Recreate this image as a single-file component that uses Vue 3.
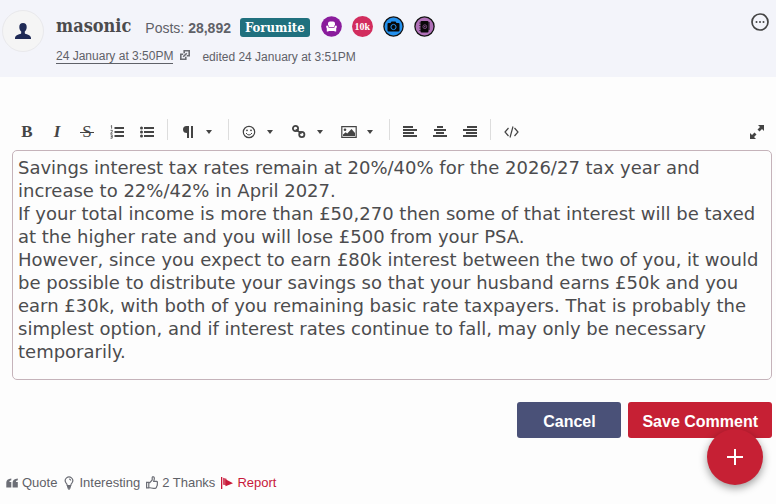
<script setup>
import { ref } from 'vue'

const comment = ref(
  'Savings interest tax rates remain at 20%/40% for the 2026/27 tax year and increase to 22%/42% in April 2027.\n' +
  'If your total income is more than £50,270 then some of that interest will be taxed at the higher rate and you will lose £500 from your PSA.\n' +
  'However, since you expect to earn £80k interest between the two of you, it would be possible to distribute your savings so that your husband earns £50k and you earn £30k, with both of you remaining basic rate taxpayers. That is probably the simplest option, and if interest rates continue to fall, may only be necessary temporarily.'
)
</script>

<template>
  <article class="post">
    <header class="head">
      <a class="avatar" href="#" aria-label="masonic profile">
        <svg width="16" height="16" viewBox="0 0 16 16"><path fill="#1f2a56" d="M8 0C5.6 0 4.3 1.6 4.3 4c0 2 .8 3.7 1.9 4.6v1.6C5.8 11.3 0 11.5 0 15v1h16v-1c0-3.5-5.800-3.700-6.200-4.800V8.600C10.900 7.700 11.700 6 11.700 4 11.700 1.600 10.400 0 8 0z" /></svg>
      </a>
      <div class="meta">
        <div class="line">
          <a class="name" href="#">masonic</a>
          <span class="posts">Posts: <b>28,892</b></span>
          <span class="rank">Forumite</span>
          <span class="badges">
            <svg width="21" height="21" viewBox="0 0 21 21"><circle cx="10.500" cy="10.500" r="10.300" fill="#8a1c9c" /><path fill="#fff" d="M7 9V7.500Q7 5.500 9 5.500h3q2 0 2 2V9q-1 .3-1 2H8q0-1.700-1-2zM6 9.500q1.600 0 1.600 2.200h5.800q0-2.200 1.600-2.200 1.300.2.700 2l-.5 1v3H13.500v-.6h-6v.6H5.800v-3l-.5-1q-.6-1.800.7-2z" /></svg>
            <span class="tenk">10k</span>
            <svg width="21" height="21" viewBox="0 0 21 21"><circle cx="10.500" cy="10.500" r="9.600" fill="#2491ee" stroke="#111" stroke-width="1.300" /><path fill="#080808" d="M5.500 7h2l1-1.500h4l1 1.500h2q1 0 1 1v6.500q0 1-1 1h-10q-1 0-1-1V8q0-1 1-1z" /><circle cx="10.500" cy="11" r="2.600" fill="none" stroke="#2491ee" /></svg>
            <svg width="21" height="21" viewBox="0 0 21 21"><circle cx="10.500" cy="10.500" r="9.600" fill="#b070b8" stroke="#111" stroke-width="1.300" /><rect x="6.500" y="5" width="8" height="11.500" rx="1" fill="#080808" /><path stroke="#080808" d="M5.500 7h1M5.500 9.500h1M5.500 12h1M5.500 14.500h1M15 6v8" /><circle cx="10.800" cy="10.700" r="1.900" fill="none" stroke="#74467a" /><circle cx="10.800" cy="10.700" r=".6" fill="#ad6bb5" /></svg>
          </span>
        </div>
        <div class="dates">
          <a class="date" href="#">24 January at 3:50PM</a>
          <svg class="permalink" width="10" height="10" viewBox="0 0 10 10" fill="none" stroke="#6b6d73" stroke-width="1.600"><path d="M3.200 4.200H.8v5h5V6.800M4.200 3.200V.8h5v5H6.800M3.200 6.800l3.600-3.600" /></svg>
          <span>edited 24 January at 3:51PM</span>
        </div>
      </div>
      <button class="more" aria-label="More options">
        <svg width="18" height="18" viewBox="0 0 18 18"><circle cx="9" cy="9" r="8" fill="none" stroke="#444" stroke-width="1.700" /><g fill="#444"><circle cx="5.500" cy="9" r="1" /><circle cx="9" cy="9" r="1" /><circle cx="12.500" cy="9" r="1" /></g></svg>
      </button>
    </header>

    <form class="editor" @submit.prevent>
      <div class="toolbar" role="toolbar" aria-label="Formatting">
        <button type="button" class="letter bold" aria-label="Bold">B</button>
        <button type="button" class="letter italic" aria-label="Italic">I</button>
        <button type="button" class="letter strike" aria-label="Strikethrough">S</button>
        <button type="button" aria-label="Ordered list">
          <svg width="14" height="14" viewBox="0 0 14 14" fill="none" stroke="#444"><path stroke-width="2" d="M4.500 3H14M4.500 7H14M4.500 11H14" /><path stroke-width=".8" d="M.8 1l.8-.5v3.200M.5 5.300h1.800v1.200L.6 8.200h2M.5 9.800h1.700v3.400H.5M.8 11.400h1.400" /></svg>
        </button>
        <button type="button" aria-label="Bulleted list">
          <svg width="14" height="14" viewBox="0 0 14 14" fill="#444"><path d="M4 2h10v2H4zM4 6h10v2H4zM4 10h10v2H4z" /><circle cx="1.500" cy="3" r="1.500" /><circle cx="1.500" cy="7" r="1.500" /><circle cx="1.500" cy="11" r="1.500" /></svg>
        </button>
        <span class="sep"></span>
        <button type="button" aria-label="Paragraph format">
          <svg width="12" height="12" viewBox="0 0 12 12" fill="#444"><path d="M4.500 0H7v12H5V7Q1 7 1 3.500 1 0 4.500 0zM9 0h2v12H9z" /></svg>
        </button>
        <button type="button" class="caret" aria-label="Paragraph menu"><i></i></button>
        <span class="sep"></span>
        <button type="button" aria-label="Emoji">
          <svg width="14" height="14" viewBox="0 0 14 14"><circle cx="7" cy="7" r="5.700" fill="none" stroke="#444" stroke-width="1.200" /><circle cx="5" cy="5.300" r=".9" fill="#444" /><circle cx="9" cy="5.300" r=".9" fill="#444" /><path fill="none" stroke="#444" d="M4 8q3 4 6 0" /></svg>
        </button>
        <button type="button" class="caret" aria-label="Emoji menu"><i></i></button>
        <button type="button" aria-label="Link">
          <svg width="14" height="14" viewBox="0 0 14 14" fill="none" stroke="#444" stroke-width="1.800"><circle cx="3.500" cy="3.500" r="2.600" /><circle cx="9.800" cy="9.500" r="2.600" /><path d="M4 4.300q1 2.200 3 1.900M9.300 8.700q-1-2.200-3-1.900" /></svg>
        </button>
        <button type="button" class="caret" aria-label="Link menu"><i></i></button>
        <button type="button" aria-label="Image">
          <svg width="16" height="14" viewBox="0 0 16 14"><path fill="none" stroke="#444" stroke-width="1.200" d="M.8 1.600h14.400v10.800H.8z" /><circle cx="4" cy="4.700" r="1.300" fill="#444" /><path fill="#444" d="M2 11V9.500l2.700-2.200 1.500 1.200L10.500 4 14 8v3z" /></svg>
        </button>
        <button type="button" class="caret" aria-label="Image menu"><i></i></button>
        <span class="sep"></span>
        <button type="button" aria-label="Align left">
          <svg width="14" height="12" viewBox="0 0 14 12" fill="#444"><path d="M0 0h10v2H0zM0 3h14v2H0zM0 6h11v2H0zM0 9h14v2H0z" /></svg>
        </button>
        <button type="button" aria-label="Align centre">
          <svg width="14" height="12" viewBox="0 0 14 12" fill="#444"><path d="M4 0h6v2H4zM1 3h12v2H1zM3 6h8v2H3zM0 9h14v2H0z" /></svg>
        </button>
        <button type="button" aria-label="Align right">
          <svg width="14" height="12" viewBox="0 0 14 12" fill="#444"><path d="M4 0h10v2H4zM0 3h14v2H0zM3 6h11v2H3zM0 9h14v2H0z" /></svg>
        </button>
        <span class="sep"></span>
        <button type="button" aria-label="Code view">
          <svg width="15" height="12" viewBox="0 0 15 12" fill="none" stroke="#444" stroke-width="1.200"><path d="M4.500 2L1 6l3.500 4M10.500 2L14 6l-3.500 4M9 .5L6 11.500" /></svg>
        </button>
        <button type="button" class="expand" aria-label="Fullscreen">
          <svg width="16" height="16" viewBox="0 0 16 16"><path fill="#444" d="M9 1h6v6l-2-2-2.500 2.500-2-2L11 3zM1 9l2 2 2.500-2.500 2 2L5 13l2 2H1z" /></svg>
        </button>
      </div>
      <textarea v-model="comment" rows="9" aria-label="Comment" spellcheck="false"></textarea>
      <div class="actions">
        <button type="button" class="btn cancel">Cancel</button>
        <button type="submit" class="btn save">Save Comment</button>
      </div>
    </form>

    <footer class="reactions">
      <a href="#">
        <svg width="12" height="14" viewBox="0 0 12 14" fill="#6c6e76"><path d="M5.300 2.500v1.800Q3.500 4.500 3.300 6H5.300v5.500H.3V6.500Q.3 3 5.300 2.500zM11.800 2.500v1.800Q10 4.500 9.800 6h2v5.500H6.600V6.500q0-3.500 5.200-4z" /></svg>
        <span>Quote</span>
      </a>
      <a href="#">
        <svg width="12" height="14" viewBox="0 0 12 14" fill="none" stroke="#6c6e76" stroke-width="1.200"><path d="M4.200 9.500Q4.200 8 3 6.800A3.700 3.700 0 1 1 9 6.800Q7.800 8 7.800 9.500zM6 3q1.500 0 1.700 1.500" /><path stroke-width="1.600" d="M4 10.300h4M4.300 11.800h3.400M5.200 13h1.600" /></svg>
        <span>Interesting</span>
      </a>
      <a href="#">
        <svg width="12" height="14" viewBox="0 0 12 14" fill="none" stroke="#6c6e76" stroke-width="1.200"><path d="M.6 6.300h2.200v5.600H.6zM2.800 6.600h1L6.200 4V1.500q.2-1 1.300-.7 1.200.7.700 2.500L7.700 5.300h3q1.200.6.500 1.700.6.800 0 1.700.3 1-.5 1.600 0 2.200-3 2-2.500-.1-4.900-.8" /></svg>
        <span>2 Thanks</span>
      </a>
      <a href="#" class="report">
        <svg width="12" height="14" viewBox="0 0 12 14" fill="#c8193a"><path d="M0 1h1.300v12H0z" /><path fill="#d64a63" d="M2 1.800l3.500 1v6.500L2 8.800z" /><path d="M4.500 3.200L12 7.300l-7.500 3z" /></svg>
        <span>Report</span>
      </a>
    </footer>
    <button class="fab" aria-label="New discussion">
      <svg width="16" height="16" viewBox="0 0 16 16" stroke="#fff" stroke-width="2"><path d="M8 0v16M0 8h16" /></svg>
    </button>
  </article>
</template>

<style>
body {
  background: #fdfdfd;
}
</style>

<style scoped>
.post {
  font-family: "Liberation Sans", Arial, sans-serif;
  color: #5f6168;
}
button {
  border: 0;
  padding: 0;
  background: none;
  color: inherit;
  font: inherit;
  cursor: pointer;
}
a {
  color: inherit;
  text-decoration: none;
}
svg {
  display: block;
  flex: none;
}
.head {
  display: flex;
  align-items: flex-start;
  min-height: 77px;
  box-sizing: border-box;
  padding: 10px 7px 0 2px;
  background: #f3f4fa;
}
.avatar {
  display: flex;
  align-items: center;
  justify-content: center;
  box-sizing: border-box;
  width: 42px;
  height: 42px;
  border: 1px solid #e9e9ec;
  border-radius: 50%;
  background: #f5f5f5;
}
.meta {
  flex: 1;
  padding: 5px 0 0 12px;
}
.line {
  display: flex;
  align-items: center;
  height: 22px;
}
.name {
  color: #4b4b4d;
  font: bold 18px/22px "DejaVu Serif Condensed", "DejaVu Serif", serif;
}
.posts {
  margin: 4px 9px 0 14px;
  font-size: 14px;
  white-space: nowrap;
}
.rank {
  margin-top: 3px;
  padding: 0 5px;
  border-radius: 3px;
  background: #20707e;
  color: #fff;
  font: bold 13px/19px "DejaVu Serif Condensed", "DejaVu Serif", serif;
}
.badges {
  display: flex;
  gap: 10px;
  margin-left: 11px;
}
.tenk {
  width: 21px;
  border-radius: 50%;
  background: #d22d5e;
  color: #fff;
  font: bold 10px/21px "Liberation Serif", serif;
  text-align: center;
}
.dates {
  display: flex;
  align-items: center;
  margin-top: 13px;
  font-size: 12px;
  line-height: 13px;
}
.date {
  border-bottom: 1px solid #5f6168;
}
.permalink {
  margin: 0 12px 4px 7px;
}
.more {
  margin-top: 3px;
}
.editor {
  padding: 40px 4px 0 12px;
}
.toolbar {
  display: flex;
  align-items: center;
  height: 30px;
  margin-bottom: 3px;
}
.toolbar button {
  display: flex;
  align-items: center;
  justify-content: center;
  width: 30px;
  height: 30px;
  color: #444;
}
.toolbar .caret {
  justify-content: flex-start;
  width: 20px;
  padding-left: 3px;
}
.caret i {
  border: 3px solid transparent;
  border-top: 4px solid #444;
  border-bottom: 0;
}
.toolbar .letter {
  font: 17px/30px "Liberation Serif", serif;
}
.toolbar .bold {
  font-weight: bold;
}
.toolbar .italic {
  font-style: italic;
  font-weight: bold;
}
.toolbar .strike {
  position: relative;
}
.strike::after {
  content: "";
  position: absolute;
  top: 15px;
  left: 8px;
  width: 14px;
  height: 1px;
  background: #444;
}
.sep {
  width: 1px;
  height: 21px;
  margin: 0 5px 5px;
  background: #ddd;
}
.toolbar .expand {
  margin-left: auto;
}
textarea {
  display: block;
  box-sizing: border-box;
  width: 100%;
  padding: 5px 5px 16px;
  border: 1px solid #c5b3ba;
  border-radius: 5px;
  background: #fdfdfd;
  color: #4c4c4e;
  font: 18px/23px "DejaVu Sans", sans-serif;
  resize: none;
  overflow: hidden;
}
.actions {
  display: flex;
  justify-content: flex-end;
  gap: 7px;
  margin-top: 22px;
}
.btn {
  min-width: 104px;
  padding: 3px 14px 0;
  border-radius: 3px;
  color: #fff;
  font-size: 16px;
  font-weight: bold;
  line-height: 33px;
}
.cancel {
  background: #4a5178;
}
.save {
  background: #c62034;
}
.reactions {
  display: flex;
  gap: 6px;
  padding: 36px 6px 0;
  font-size: 13px;
  line-height: 18px;
}
.reactions a {
  display: flex;
  align-items: center;
  gap: 4px;
}
.reactions .report {
  color: #c8193a;
}
.fab {
  position: fixed;
  right: 13px;
  bottom: 19px;
  display: flex;
  align-items: center;
  justify-content: center;
  width: 56px;
  height: 56px;
  border-radius: 50%;
  background: #c62034;
  box-shadow: 0 3px 8px rgba(0, 0, 0, 0.4);
}
</style>
